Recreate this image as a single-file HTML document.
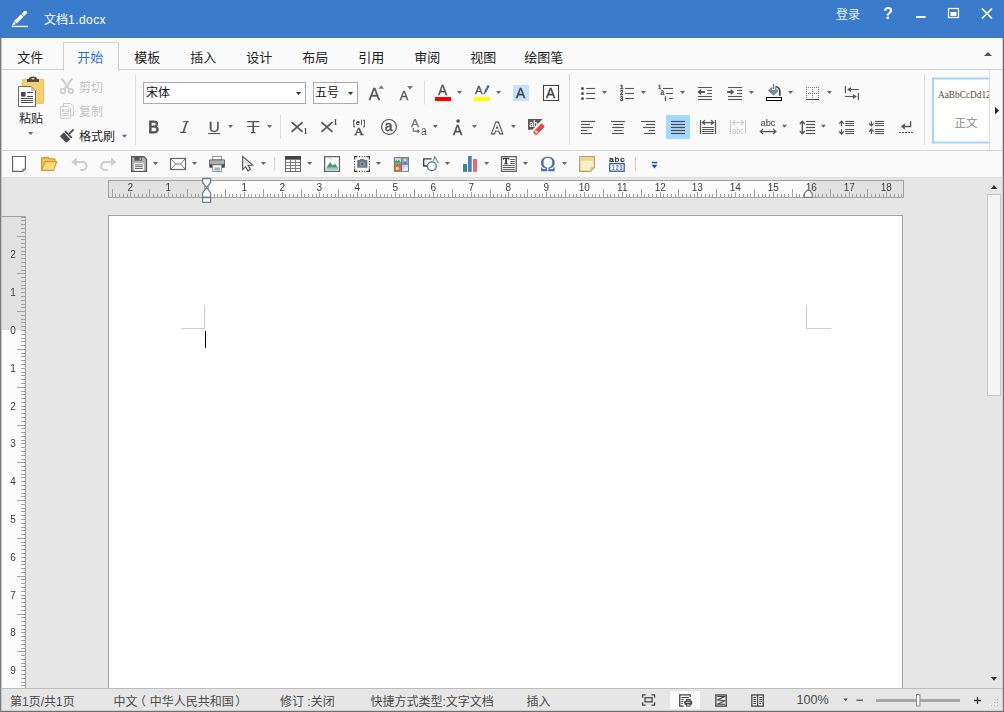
<!DOCTYPE html>
<html lang="zh-CN"><head><meta charset="utf-8"><title>文档1.docx</title>
<style>
html,body{margin:0;padding:0;}
body{width:1004px;height:712px;overflow:hidden;background:#e6e6e6;position:relative;font-family:"Liberation Sans","Noto Sans CJK SC",sans-serif;}
.bg{position:absolute;left:0;}
.t{position:absolute;white-space:nowrap;line-height:1.35;}
svg{position:absolute;left:0;top:0;}
svg.top{will-change:transform;}
svg text{font-family:"Liberation Sans","Noto Sans CJK SC",sans-serif;}
</style></head><body>
<div class="bg" style="top:0;width:1004px;height:38px;background:#3a7bcb"></div>
<div class="bg" style="top:38px;width:1004px;height:139px;background:#fafafa"></div>
<div class="bg" style="top:69px;width:1004px;height:1px;background:#cfcfcf"></div>
<div class="bg" style="top:42px;left:63px;width:54px;height:28px;background:#fafafa;border:1px solid #cfcfcf;border-bottom:none"></div>
<div class="bg" style="top:150px;width:1004px;height:1px;background:#d6d6d6"></div>
<div class="bg" style="top:177px;width:1004px;height:1px;background:#dddddd"></div>
<svg width="1004" height="712" viewBox="0 0 1004 712">
<rect x="143.5" y="82.5" width="162" height="21" fill="#fff" stroke="#ababab"/>
<rect x="313.5" y="82.5" width="44" height="21" fill="#fff" stroke="#ababab"/>
<path d="M989 78.5 H933 V142.5 H989" fill="#fff" stroke="#a8d3fa" stroke-width="2"/>
<rect x="108.5" y="215.5" width="794" height="480" fill="#fff" stroke="#a0a0a0"/>
<rect x="0" y="688" width="1004" height="24" fill="#e6e6e6"/><rect x="0" y="688" width="1004" height="1" fill="#bcbcbc"/>
</svg>
<div class="t" style="left:44px;top:11.5px;font-size:12px;color:#ffffff;">文档<span style="letter-spacing:0.45px">1.docx</span></div>
<div class="t" style="left:836px;top:6.5px;font-size:12px;color:#e4eefb;">登录</div>
<div class="t" style="left:17.3px;top:48.6px;font-size:13px;color:#1e1e1e;">文件</div>
<div class="t" style="left:77.3px;top:48.6px;font-size:13px;color:#2b70d6;">开始</div>
<div class="t" style="left:134.3px;top:48.6px;font-size:13px;color:#1e1e1e;">模板</div>
<div class="t" style="left:190.3px;top:48.6px;font-size:13px;color:#1e1e1e;">插入</div>
<div class="t" style="left:246.3px;top:48.6px;font-size:13px;color:#1e1e1e;">设计</div>
<div class="t" style="left:302.3px;top:48.6px;font-size:13px;color:#1e1e1e;">布局</div>
<div class="t" style="left:358.3px;top:48.6px;font-size:13px;color:#1e1e1e;">引用</div>
<div class="t" style="left:414.3px;top:48.6px;font-size:13px;color:#1e1e1e;">审阅</div>
<div class="t" style="left:470.3px;top:48.6px;font-size:13px;color:#1e1e1e;">视图</div>
<div class="t" style="left:524.3px;top:48.6px;font-size:13px;color:#1e1e1e;">绘图笔</div>
<div class="t" style="left:19px;top:110.9px;font-size:12px;color:#1e1e1e;">粘贴</div>
<div class="t" style="left:79px;top:79.5px;font-size:12px;color:#c4c4c4;">剪切</div>
<div class="t" style="left:79px;top:103.8px;font-size:12px;color:#c4c4c4;">复制</div>
<div class="t" style="left:79px;top:128.8px;font-size:12px;color:#1e1e1e;">格式刷</div>
<div class="t" style="left:146px;top:85.4px;font-size:12px;color:#111;">宋体</div>
<div class="t" style="left:315px;top:85.4px;font-size:12px;color:#111;">五号</div>
<div class="t" style="left:938px;top:88px;width:51px;overflow:hidden;font-size:10px;color:#5a4a3a;font-family:'Liberation Serif',serif;"><span style="display:inline-block;transform:scaleX(0.93);transform-origin:0 0">AaBbCcDd12</span></div>
<div class="t" style="left:954.6px;top:115.6px;font-size:11.5px;color:#8a8a8a;font-family:"Noto Serif CJK SC","Noto Sans CJK SC",serif;font-weight:300">正文</div>
<div class="t" style="left:10px;top:693.8px;font-size:12px;color:#4a4a4a;">第1页/共1页</div>
<div class="t" style="left:113.6px;top:693.8px;font-size:12px;color:#4a4a4a;">中文<span style="position:relative;left:-3.5px">（</span>中华人民共和国<span style="position:relative;left:1.5px">）</span></div>
<div class="t" style="left:280px;top:693.8px;font-size:12px;color:#4a4a4a;">修订 :关闭</div>
<div class="t" style="left:370.5px;top:693.8px;font-size:12px;color:#4a4a4a;">快捷方式类型:文字文档</div>
<div class="t" style="left:526.5px;top:693.8px;font-size:12px;color:#4a4a4a;">插入</div>
<div class="t" style="left:796.5px;top:692.2px;font-size:12.6px;color:#4a4a4a;">100%</div>
<svg class="top" width="1004" height="712" viewBox="0 0 1004 712">
<g fill="#fff" transform="translate(12.1,25.4) rotate(-44.2)"><path d="M0 0 L3.7 -1.6 V1.6 Z"/><rect x="4.5" y="-1.8" width="9.6" height="3.6"/><path d="M14.9 -1.8 H18.4 A1.8 1.8 0 0 1 18.4 1.8 H14.9 Z"/></g><rect x="11.8" y="25.8" width="16.3" height="1.3" fill="#fff"/>
<text x="883.3" y="19" font-size="16" fill="#fff" font-weight="bold">?</text>
<rect x="916" y="16" width="9.5" height="2" fill="#fff"/>
<rect x="948.5" y="8.5" width="10" height="9" fill="none" stroke="#fff" stroke-width="1.2"/><rect x="950.5" y="12" width="6" height="4" fill="#fff"/>
<path d="M982 8.5 L992 18.5 M992 8.5 L982 18.5" stroke="#fff" stroke-width="1.7" fill="none"/>
<polygon points="984,56 992,56 988,52" fill="#555"/>
<rect x="22.5" y="79.2" width="21.3" height="24.2" rx="1" fill="#f4d070" stroke="#e6b94e" stroke-width="0.8"/>
<path d="M27 82 L27 79.6 Q27 79 27.8 79 L28.8 79 Q29.6 76.6 33 76.6 Q36.4 76.6 37.2 79 L38.2 79 Q39 79 39 79.6 L39 82 Z" fill="#4a4a4a"/>
<ellipse cx="33" cy="78.7" rx="1.7" ry="0.7" fill="#e8e0c8"/>
<path d="M18.5 86.5 L31 86.5 L35.5 91 L35.5 106.5 L18.5 106.5 Z" fill="#fff" stroke="#6a6a6a" stroke-width="1"/>
<path d="M31 86.8 L31 91 L35.2 91 Z" fill="#c4c4c4"/>
<rect x="21" y="92" width="4.6" height="4.6" fill="#4a4a4a"/>
<line x1="27" y1="92.5" x2="33" y2="92.5" stroke="#4a4a4a" stroke-width="1"/>
<line x1="27" y1="96.5" x2="33" y2="96.5" stroke="#4a4a4a" stroke-width="1"/>
<line x1="21" y1="98.5" x2="33" y2="98.5" stroke="#4a4a4a" stroke-width="1"/>
<line x1="21" y1="100.5" x2="33" y2="100.5" stroke="#4a4a4a" stroke-width="1"/>
<line x1="21" y1="102.5" x2="33" y2="102.5" stroke="#4a4a4a" stroke-width="1"/>
<polygon points="28.099999999999998,132.0 33.3,132.0 30.7,135.0" fill="#6a6a6a"/>
<g stroke="#cbcbcb" fill="none"><circle cx="62.9" cy="91.1" r="2.3" stroke-width="1.6"/><circle cx="70.8" cy="91.1" r="2.3" stroke-width="1.6"/><path d="M64.4 89.2 L72.3 78.5 M69.4 89.2 L61.5 78.5" stroke-width="2.1"/></g><rect x="66.3" y="84" width="1.2" height="1.2" fill="#fafafa"/>
<g stroke="#cbcbcb" fill="none" stroke-width="1"><path d="M63.5 106 V103.5 H70.6 L73.4 106.3 V115.5 H71.2"/><path d="M60.5 106.5 H68 L70.6 109.1 V118.3 H60.5 Z" fill="#fafafa"/><path d="M65.6 109.9 H69.2 M65.6 111.7 H69.2 M62.1 113.5 H69.2 M62.1 115.5 H69.2"/></g><rect x="62.1" y="109.4" width="2.5" height="2.3" fill="#cbcbcb"/>
<g fill="#4a4a4a"><path d="M72.9 128.7 L74.2 130 L69.9 134.6 L68.6 133.3 Z"/><path d="M65.7 130.5 L72.4 137.2 L71.1 138.5 L64.4 131.8 Z"/><path d="M63.7 132.6 L70.3 139.2 L66.2 142.7 L59.9 136.3 Z"/></g>
<polygon points="121.9,134.8 127.1,134.8 124.5,137.8" fill="#6a6a6a"/>
<line x1="135.5" y1="74" x2="135.5" y2="145" stroke="#dcdcdc" stroke-width="1"/>
<polygon points="296.0,92.0 301.20000000000005,92.0 298.6,95.0" fill="#333"/>
<polygon points="348.0,92.0 353.20000000000005,92.0 350.6,95.0" fill="#333"/>
<text x="368.7" y="100" font-size="16.8" fill="#555555" stroke="#555555" stroke-width="0.35">A</text>
<polygon points="378.4,88.7 384,88.7 381.2,85.2" fill="#7a7a7a"/>
<text x="399.8" y="100" font-size="12.8" fill="#555555" stroke="#555555" stroke-width="0.35">A</text>
<polygon points="407.1,86.1 413,86.1 410.05,89.7" fill="#7a7a7a"/>
<line x1="424.5" y1="81" x2="424.5" y2="104.5" stroke="#dcdcdc" stroke-width="1"/>
<text x="437.9" y="94.8" font-size="13.8" fill="#555555" stroke="#555555" stroke-width="0.35">A</text>
<rect x="435" y="97" width="16" height="4" fill="#ff0000"/>
<polygon points="456.9,90.9 462.1,90.9 459.5,93.9" fill="#6a6a6a"/>
<text x="474.9" y="93.5" font-size="11.4" fill="#555555" stroke="#555555" stroke-width="0.35">A</text>
<path d="M487.6 84.9 L489.7 86 L486.2 92.5 L484.2 91.4 Z" fill="#3b6fb6"/><path d="M484.2 91.4 L486.2 92.5 L483.5 95 Z" fill="#c4513a"/>
<rect x="474" y="97" width="16" height="4" fill="#ffff00"/>
<polygon points="496.0,90.9 501.20000000000005,90.9 498.6,93.9" fill="#6a6a6a"/>
<rect x="513" y="85" width="16" height="16" fill="#c4e2ff"/>
<text x="516" y="97.7" font-size="13.8" fill="#444" stroke="#444" stroke-width="0.4">A</text>
<rect x="543.5" y="85.5" width="15" height="15" fill="#fdfdfd" stroke="#444" stroke-width="1.1"/>
<text x="546.1" y="97.7" font-size="13.8" fill="#444" stroke="#444" stroke-width="0.4">A</text>
<text x="148.3" y="132.9" font-size="16.3" fill="#555555" stroke="#555555" stroke-width="0.8">B</text>
<path d="M183 121.7 H189 M180.1 132.4 H186.2" stroke="#555555" stroke-width="1.1" fill="none"/><path d="M186.9 121.4 L183.1 132.7" stroke="#555555" stroke-width="1.6" fill="none"/>
<text x="208.7" y="132.1" font-size="15.2" fill="#555555" stroke="#555555" stroke-width="0.35">U</text>
<line x1="208.1" y1="133.55" x2="220" y2="133.55" stroke="#555555" stroke-width="1.1"/>
<polygon points="227.9,125.0 233.1,125.0 230.5,128.0" fill="#6a6a6a"/>
<path d="M247 121.6 H259.2 M247 126.5 H259.2 M250.9 132.6 H255.5" stroke="#555555" stroke-width="1.2" fill="none"/><path d="M253.2 121.6 V132.6" stroke="#555555" stroke-width="1.6" fill="none"/>
<polygon points="266.9,125.0 272.1,125.0 269.5,128.0" fill="#6a6a6a"/>
<line x1="280.5" y1="115" x2="280.5" y2="139" stroke="#dcdcdc" stroke-width="1"/>
<path d="M291.6 122.2 L302.6 131.8 M302.6 122.2 L291.6 131.8" stroke="#555555" stroke-width="1.75" fill="none"/>
<text x="303.5" y="133.8" font-size="7.8" fill="#4a4a4a" style="font-family:Liberation Serif,serif" font-weight="bold">1</text>
<path d="M321.4 122.2 L332.4 131.8 M332.4 122.2 L321.4 131.8" stroke="#555555" stroke-width="1.75" fill="none"/>
<text x="333.6" y="124.9" font-size="7.8" fill="#4a4a4a" style="font-family:Liberation Serif,serif" font-weight="bold">1</text>
<text x="353" y="124.7" font-size="6.9" fill="#4a4a4a" stroke="#4a4a4a" stroke-width="0.3" textLength="12.2" lengthAdjust="spacing">[ei]</text>
<text x="354.1" y="134.8" font-size="11.4" fill="#555555" style="font-family:Liberation Serif,serif" stroke="#555" stroke-width="0.35" textLength="9.9" lengthAdjust="spacingAndGlyphs">A</text>
<circle cx="389" cy="126.9" r="7.4" fill="none" stroke="#555555" stroke-width="1.2"/>
<text x="384.7" y="130.6" font-size="13.8" fill="#555555" stroke="#555555" stroke-width="0.5">a</text>
<text x="411.1" y="126.5" font-size="10.1" fill="#707070" stroke="#707070" stroke-width="0.25" textLength="8" lengthAdjust="spacingAndGlyphs">A</text>
<path d="M413.3 127.8 V131.2 H418.6" stroke="#666" stroke-width="1.2" fill="none"/><polygon points="420,131.2 417.4,129 417.4,133.4" fill="#666"/>
<text x="421" y="134.8" font-size="12" fill="#555" textLength="5.6" lengthAdjust="spacingAndGlyphs">a</text>
<polygon points="432.7,125.0 437.90000000000003,125.0 435.3,128.0" fill="#6a6a6a"/>
<circle cx="458.1" cy="121" r="1.85" fill="#555555"/>
<text x="452.9" y="134.8" font-size="13.9" fill="#555555" stroke="#555555" stroke-width="0.45">A</text>
<polygon points="471.9,125.0 477.1,125.0 474.5,128.0" fill="#6a6a6a"/>
<g transform="translate(492.5,132.6) scale(0.9,1)" font-size="15.2"><text x="0.7" y="0.7" fill="#d6d6d6" stroke="#d6d6d6" stroke-width="3.1" stroke-linejoin="round">A</text><text x="0" y="0" fill="#4a4a4a" stroke="#4a4a4a" stroke-width="2.8" stroke-miterlimit="2.5">A</text><text x="0" y="0" fill="#fff" stroke="#fff" stroke-width="0.55">A</text></g>
<polygon points="510.9,125.0 516.1,125.0 513.5,128.0" fill="#6a6a6a"/>
<path d="M528 119 H542.1 L542.1 119.6 L532.4 129.8 H528 Z" fill="#595959"/>
<text x="529.2" y="126.6" font-size="8.2" fill="#fff" font-weight="bold" textLength="8.6" lengthAdjust="spacingAndGlyphs">ab</text>
<g transform="rotate(45 538.9 129.3)"><rect x="536.2" y="122.8" width="5.4" height="13.2" rx="1.4" fill="#e5484d" stroke="#fafafa" stroke-width="0.8"/><rect x="537.3" y="132" width="3.2" height="1.9" rx="0.9" fill="#fff"/></g>
<line x1="569.5" y1="74" x2="569.5" y2="145" stroke="#dcdcdc" stroke-width="1"/>
<circle cx="582.5" cy="88.5" r="1.5" fill="#555555"/>
<line x1="586.2" y1="88.5" x2="595" y2="88.5" stroke="#555555" stroke-width="1.08"/>
<circle cx="582.5" cy="93.5" r="1.5" fill="#555555"/>
<line x1="586.2" y1="93.5" x2="595" y2="93.5" stroke="#555555" stroke-width="1.08"/>
<circle cx="582.5" cy="98.5" r="1.5" fill="#555555"/>
<line x1="586.2" y1="98.5" x2="595" y2="98.5" stroke="#555555" stroke-width="1.08"/>
<polygon points="601.9,91.0 607.1,91.0 604.5,94.0" fill="#6a6a6a"/>
<line x1="625" y1="88.5" x2="634" y2="88.5" stroke="#555555" stroke-width="1.08"/>
<line x1="625" y1="93.5" x2="634" y2="93.5" stroke="#555555" stroke-width="1.08"/>
<line x1="625" y1="98.5" x2="634" y2="98.5" stroke="#555555" stroke-width="1.08"/>
<text x="619.9" y="88.9" font-size="6" fill="#4a4a4a" font-weight="bold" stroke="#4a4a4a" stroke-width="0.35" textLength="3.3" lengthAdjust="spacingAndGlyphs">1</text>
<text x="619.9" y="94.8" font-size="6.4" fill="#4a4a4a" font-weight="bold" stroke="#4a4a4a" stroke-width="0.35" textLength="3.3" lengthAdjust="spacingAndGlyphs">2</text>
<text x="619.9" y="101" font-size="6.6" fill="#4a4a4a" font-weight="bold" stroke="#4a4a4a" stroke-width="0.35" textLength="3.3" lengthAdjust="spacingAndGlyphs">3</text>
<polygon points="640.8,91.0 646.0,91.0 643.4,94.0" fill="#6a6a6a"/>
<text x="658.2" y="89" font-size="6" fill="#4a4a4a" font-weight="bold" stroke="#4a4a4a" stroke-width="0.3" textLength="2.8" lengthAdjust="spacingAndGlyphs">1</text>
<line x1="663" y1="88.5" x2="673" y2="88.5" stroke="#555555" stroke-width="1.08"/>
<text x="660.6" y="94.9" font-size="8.6" fill="#4a4a4a" font-weight="bold" stroke="#4a4a4a" stroke-width="0.2" textLength="3.6" lengthAdjust="spacingAndGlyphs">a</text>
<line x1="666" y1="93.5" x2="673" y2="93.5" stroke="#555555" stroke-width="1.08"/>
<text x="664.5" y="101" font-size="7" fill="#4a4a4a" font-weight="bold" stroke="#4a4a4a" stroke-width="0.2">i</text>
<line x1="669" y1="98.5" x2="673" y2="98.5" stroke="#555555" stroke-width="1.08"/>
<polygon points="679.9,91.0 685.1,91.0 682.5,94.0" fill="#6a6a6a"/>
<line x1="698" y1="87.5" x2="712" y2="87.5" stroke="#555555" stroke-width="1.08"/>
<line x1="698" y1="96.5" x2="712" y2="96.5" stroke="#555555" stroke-width="1.08"/>
<line x1="698" y1="99.5" x2="712" y2="99.5" stroke="#555555" stroke-width="1.08"/>
<line x1="707.2" y1="90.5" x2="712" y2="90.5" stroke="#555555" stroke-width="1.08"/>
<line x1="707.2" y1="93.5" x2="712" y2="93.5" stroke="#555555" stroke-width="1.08"/>
<path d="M699.6 92 H704.9" stroke="#555555" stroke-width="1.9"/><polygon points="697.3,92 701.1,88.9 701.1,95.1" fill="#555555"/>
<line x1="728" y1="87.5" x2="742" y2="87.5" stroke="#555555" stroke-width="1.08"/>
<line x1="728" y1="96.5" x2="742" y2="96.5" stroke="#555555" stroke-width="1.08"/>
<line x1="728" y1="99.5" x2="742" y2="99.5" stroke="#555555" stroke-width="1.08"/>
<line x1="737.2" y1="90.5" x2="742" y2="90.5" stroke="#555555" stroke-width="1.08"/>
<line x1="737.2" y1="93.5" x2="742" y2="93.5" stroke="#555555" stroke-width="1.08"/>
<path d="M727.1 92 H732.2" stroke="#555555" stroke-width="1.9"/><polygon points="734.4,92 730.6,88.9 730.6,95.1" fill="#555555"/>
<polygon points="748.8,91.0 754.0,91.0 751.4,94.0" fill="#6a6a6a"/>
<path d="M767.9 90.7 L773.5 85.6 L778.4 90.9 L773.5 95.8 Z" fill="#7f8994"/>
<path d="M775.4 86.5 Q779.8 87.4 779.8 91.4 V95.8" stroke="#444" stroke-width="1.7" fill="none"/>
<path d="M773.5 84 V90" stroke="#fafafa" stroke-width="2.6"/><path d="M773.5 84 V89.2" stroke="#4a78b0" stroke-width="1.2"/>
<rect x="766.5" y="97.5" width="15" height="3" fill="#fff" stroke="#000" stroke-width="1"/>
<polygon points="787.9,91.0 793.1,91.0 790.5,94.0" fill="#6a6a6a"/>
<g stroke="#777" stroke-width="1" stroke-dasharray="1 1" fill="none" shape-rendering="crispEdges"><path d="M806 87.5 H819 M806 93.5 H819 M806.5 89 V99 M812.5 89 V99 M818.5 89 V99"/></g>
<line x1="806" y1="99.5" x2="819" y2="99.5" stroke="#444" stroke-width="1.1"/>
<polygon points="826.8,91.0 832.0,91.0 829.4,94.0" fill="#6a6a6a"/>
<g stroke="#555555" stroke-width="1.2" fill="none"><path d="M845.4 86 V93 M849.5 89.5 H858.8 M858.4 93 V100 M845.1 96.5 H854.4"/></g>
<polygon points="847,89.5 851,87 851,92" fill="#555555"/><polygon points="856.9,96.5 852.9,94 852.9,99" fill="#555555"/>
<line x1="581" y1="121.5" x2="595" y2="121.5" stroke="#555555" stroke-width="1.1500000000000001"/>
<line x1="581" y1="124.5" x2="590" y2="124.5" stroke="#555555" stroke-width="1.1500000000000001"/>
<line x1="581" y1="127.5" x2="593" y2="127.5" stroke="#555555" stroke-width="1.1500000000000001"/>
<line x1="581" y1="130.5" x2="587" y2="130.5" stroke="#555555" stroke-width="1.1500000000000001"/>
<line x1="581" y1="133.5" x2="592" y2="133.5" stroke="#555555" stroke-width="1.1500000000000001"/>
<line x1="611" y1="121.5" x2="625" y2="121.5" stroke="#555555" stroke-width="1.1500000000000001"/>
<line x1="613" y1="124.5" x2="623" y2="124.5" stroke="#555555" stroke-width="1.1500000000000001"/>
<line x1="612" y1="127.5" x2="624" y2="127.5" stroke="#555555" stroke-width="1.1500000000000001"/>
<line x1="614" y1="130.5" x2="622" y2="130.5" stroke="#555555" stroke-width="1.1500000000000001"/>
<line x1="612" y1="133.5" x2="624" y2="133.5" stroke="#555555" stroke-width="1.1500000000000001"/>
<line x1="641" y1="121.5" x2="655" y2="121.5" stroke="#555555" stroke-width="1.1500000000000001"/>
<line x1="646" y1="124.5" x2="655" y2="124.5" stroke="#555555" stroke-width="1.1500000000000001"/>
<line x1="643" y1="127.5" x2="655" y2="127.5" stroke="#555555" stroke-width="1.1500000000000001"/>
<line x1="649" y1="130.5" x2="655" y2="130.5" stroke="#555555" stroke-width="1.1500000000000001"/>
<line x1="644" y1="133.5" x2="655" y2="133.5" stroke="#555555" stroke-width="1.1500000000000001"/>
<rect x="666" y="115" width="24" height="24" fill="#a6d8ff"/>
<line x1="671" y1="121.5" x2="685" y2="121.5" stroke="#4a4a4a" stroke-width="1.1500000000000001"/>
<line x1="671" y1="124.5" x2="685" y2="124.5" stroke="#4a4a4a" stroke-width="1.1500000000000001"/>
<line x1="671" y1="127.5" x2="685" y2="127.5" stroke="#4a4a4a" stroke-width="1.1500000000000001"/>
<line x1="671" y1="130.5" x2="685" y2="130.5" stroke="#4a4a4a" stroke-width="1.1500000000000001"/>
<line x1="671" y1="133.5" x2="685" y2="133.5" stroke="#4a4a4a" stroke-width="1.1500000000000001"/>
<g stroke="#555555" fill="none"><path d="M700.5 120 V134 M715.5 120 V134" stroke-width="1.2"/><path d="M702.6 122.5 H713.4 M705 120.2 L702.4 122.5 L705 124.8 M711 120.2 L713.6 122.5 L711 124.8" stroke-width="1.25"/><path d="M702.2 127.45 H713.8 M702.2 129.5 H713.8 M702.2 131.5 H713.8 M702.2 133.45 H713.8" stroke-width="1.05"/></g>
<g stroke="#cbcbcb" fill="none"><path d="M730.4 120 V134 M745.5 120 V134" stroke-width="1.1"/><path d="M732.6 122.5 H743.4 M735 120.2 L732.4 122.5 L735 124.8 M741 120.2 L743.6 122.5 L741 124.8" stroke-width="1.1"/></g>
<text x="732.2" y="133.5" font-size="8.6" fill="#cbcbcb" textLength="11.8" lengthAdjust="spacingAndGlyphs">abc</text>
<text x="760.6" y="126.4" font-size="8.7" fill="#555555" stroke="#555555" stroke-width="0.15" textLength="14.8" lengthAdjust="spacingAndGlyphs">abc</text>
<g stroke="#555555" stroke-width="1.25" fill="none"><path d="M760.4 131.5 H775.8 M763.2 128.9 L760.3 131.5 L763.2 134.1 M773 128.9 L775.9 131.5 L773 134.1"/></g>
<polygon points="781.9,124.8 787.1,124.8 784.5,127.8" fill="#6a6a6a"/>
<g stroke="#555555" stroke-width="1.3" fill="none"><path d="M802.3 121.4 V133.6 M799.8 124 L802.3 121.2 L804.8 124 M799.8 131 L802.3 133.8 L804.8 131"/></g>
<line x1="806" y1="121.5" x2="815" y2="121.5" stroke="#555555" stroke-width="1.1500000000000001"/>
<line x1="806" y1="124.5" x2="815" y2="124.5" stroke="#555555" stroke-width="1.1500000000000001"/>
<line x1="806" y1="127.5" x2="815" y2="127.5" stroke="#555555" stroke-width="1.1500000000000001"/>
<line x1="806" y1="130.5" x2="815" y2="130.5" stroke="#555555" stroke-width="1.1500000000000001"/>
<line x1="806" y1="133.5" x2="815" y2="133.5" stroke="#555555" stroke-width="1.1500000000000001"/>
<polygon points="820.8,124.8 826.0,124.8 823.4,127.8" fill="#6a6a6a"/>
<line x1="845.3" y1="121.45" x2="854.1" y2="121.45" stroke="#555555" stroke-width="1.05"/>
<line x1="845.3" y1="123.5" x2="854.1" y2="123.5" stroke="#555555" stroke-width="1.05"/>
<line x1="845.3" y1="125.5" x2="854.1" y2="125.5" stroke="#555555" stroke-width="1.05"/>
<line x1="845.3" y1="129.5" x2="854.1" y2="129.5" stroke="#555555" stroke-width="1.05"/>
<line x1="845.3" y1="131.5" x2="854.1" y2="131.5" stroke="#555555" stroke-width="1.05"/>
<line x1="845.3" y1="133.55" x2="854.1" y2="133.55" stroke="#555555" stroke-width="1.05"/>
<path d="M841.5 121.2 V125.9 M839.2 123.7 L841.5 121.2 L843.8 123.7" stroke="#555555" stroke-width="1.25" fill="none"/>
<path d="M841.5 129.2 V134 M839.2 131.5 L841.5 134 L843.8 131.5" stroke="#555555" stroke-width="1.25" fill="none"/>
<line x1="875.1999999999999" y1="121.45" x2="884.0" y2="121.45" stroke="#555555" stroke-width="1.05"/>
<line x1="875.1999999999999" y1="123.5" x2="884.0" y2="123.5" stroke="#555555" stroke-width="1.05"/>
<line x1="875.1999999999999" y1="125.5" x2="884.0" y2="125.5" stroke="#555555" stroke-width="1.05"/>
<line x1="875.1999999999999" y1="129.5" x2="884.0" y2="129.5" stroke="#555555" stroke-width="1.05"/>
<line x1="875.1999999999999" y1="131.5" x2="884.0" y2="131.5" stroke="#555555" stroke-width="1.05"/>
<line x1="875.1999999999999" y1="133.55" x2="884.0" y2="133.55" stroke="#555555" stroke-width="1.05"/>
<path d="M871.4 121.2 V125.9 M869.1 123.4 L871.4 125.9 L873.6999999999999 123.4" stroke="#555555" stroke-width="1.25" fill="none"/>
<path d="M871.4 129.2 V134 M869.1 131.7 L871.4 129.2 L873.6999999999999 131.7" stroke="#555555" stroke-width="1.25" fill="none"/>
<path d="M910.6 121 V126.5 H904" stroke="#555555" stroke-width="1.3" fill="none"/><polygon points="901,126.5 904.8,123.3 904.8,129.7" fill="#555555"/>
<path d="M899 132.5 H913.2" stroke="#555555" stroke-width="1.05" stroke-dasharray="2 1"/>
<line x1="924.5" y1="74" x2="924.5" y2="145" stroke="#dcdcdc" stroke-width="1"/>
<line x1="989.5" y1="70" x2="989.5" y2="150" stroke="#e0e0e0" stroke-width="1"/>
<polygon points="995,106.8 995,114.4 999,110.6" fill="#222"/>
<path d="M12.6 156.5 H25.4 V169 L22.6 171.4 H12.6 Z" fill="#fff" stroke="#666" stroke-width="1.2"/><path d="M22.2 168.4 H25.2 L22.2 171.2 Z" fill="#9a9a9a"/>
<path d="M41.6 170.4 V158.4 Q41.6 157.8 42.4 157.8 L43.4 157.6 H48.6 L49.4 158.8 H54.4 Q55 158.8 55 159.4 V162" fill="#f0c458" stroke="#cc9a2e" stroke-width="1.1"/><path d="M41.6 170.4 L45.3 161.6 H56.7 L53.6 170.4 Z" fill="#fddc80" stroke="#cf9c30" stroke-width="1.1"/>
<g fill="none" stroke="#cdcdcd" stroke-width="2.1"><path d="M76 162 H82.6 A4 4 0 0 1 82.6 170 H80.2"/><path d="M111.8 162 H105.2 A4 4 0 0 0 105.2 170 H107.6"/></g>
<polygon points="71.3,162 76.8,157.6 76.8,166.4" fill="#cdcdcd"/><polygon points="116.5,162 111,157.6 111,166.4" fill="#cdcdcd"/>
<path d="M131.6 156.6 H143.8 L146.5 159.3 V171.4 H131.6 Z" fill="#b2b2b2" stroke="#555" stroke-width="1.2"/><rect x="134.4" y="156.8" width="7.6" height="3.9" fill="#555"/><rect x="139.6" y="157.7" width="1.5" height="2.1" fill="#c8c8c8"/><rect x="133.9" y="163.3" width="9.8" height="7.4" fill="#fff"/><path d="M135 164.9 H142.8 M135 166.7 H142.8 M135 168.5 H142.8" stroke="#555" stroke-width="0.9"/>
<polygon points="152.8,162.0 158.0,162.0 155.4,165.0" fill="#6a6a6a"/>
<rect x="170.5" y="158.5" width="15" height="11" fill="#fff" stroke="#666" stroke-width="1.2"/><path d="M170.8 158.8 L175.6 164 L170.8 169.3 M185.2 158.8 L180.6 164 L185.2 169.3 M175.6 164 H180.6" fill="none" stroke="#666" stroke-width="0.9"/>
<polygon points="192.0,162.0 197.2,162.0 194.6,165.0" fill="#6a6a6a"/>
<rect x="212.7" y="156.4" width="8.8" height="3.6" fill="#fff" stroke="#888" stroke-width="0.9"/><rect x="209.2" y="159.6" width="15.7" height="8.2" rx="0.8" fill="#4a4a4a"/><rect x="209.9" y="160.3" width="14.3" height="3.9" fill="#adadad"/><rect x="222.1" y="160.7" width="1.8" height="1.7" fill="#6fe6ee"/><rect x="212.7" y="164.9" width="8.8" height="6.5" fill="#fff" stroke="#888" stroke-width="0.9"/><path d="M214.3 168.1 H219.9 M214.3 169.8 H219.9" stroke="#3f6fb5" stroke-width="0.9"/>
<path d="M242.7 156.5 V169.6 L245.6 166.7 L248 170.8 L250.4 169.3 L248.1 165.4 L252.6 165 Z" fill="#fff" stroke="#555" stroke-width="1.2" stroke-linejoin="miter"/><path d="M244 159.2 L251 164.6 L247.2 165 L249.4 169 L248.4 169.6 L246 165.6 Z" fill="#dcdcdc" opacity="0.8"/>
<polygon points="260.79999999999995,162.0 266.0,162.0 263.4,165.0" fill="#6a6a6a"/>
<line x1="274.7" y1="157" x2="274.7" y2="170.6" stroke="#d0d0d0" stroke-width="1"/>
<rect x="285.5" y="156.5" width="15" height="15" fill="#fff" stroke="#6a6a6a"/><rect x="285" y="156" width="16" height="3.7" fill="#444"/><path d="M290.5 159.6 V171 M295.6 159.6 V171 M286 162.5 H300 M286 165.5 H300 M286 168.5 H300" stroke="#7a7a7a" stroke-width="1"/>
<polygon points="307.0,162.0 312.20000000000005,162.0 309.6,165.0" fill="#6a6a6a"/>
<rect x="324.65" y="156.65" width="14.8" height="14.7" fill="#fff" stroke="#666" stroke-width="1.3"/><path d="M326.6 158.6 Q329 157.8 331.4 158.6 T336 158.4 L335.8 159.2 Q332 160 329 159.4 Z" fill="#cfe4f6"/><path d="M326.3 167.8 L330.1 162 L332.8 165.4 L335.1 163.8 L338 167.4 V167.8 Z" fill="#4a9e6a"/><rect x="326.3" y="167.8" width="11.7" height="2" fill="#8ac0ea"/>
<g fill="none" stroke="#444" stroke-width="1.2"><path d="M354.6 159.4 V156.6 H357.6 M366.4 156.6 H369.4 V159.4 M369.4 168.6 V171.4 H366.4 M357.6 171.4 H354.6 V168.6"/><path d="M359 156.6 H365.4 M359 171.4 H365.4 M354.6 161 V167.4 M369.4 161 V167.4" stroke-dasharray="1.1 1.55"/></g>
<path d="M357.2 160.6 Q357.2 160.1 357.8 160.1 H359.6 L360.2 158.9 H364.2 L364.8 160.1 H366.8 Q367.4 160.1 367.4 160.6 V167.8 H357.2 Z" fill="#6a7686"/><circle cx="362.2" cy="164" r="2.6" fill="#97a1ae"/><circle cx="362.2" cy="164" r="1.5" fill="#5c6878"/>
<polygon points="375.9,162.0 381.1,162.0 378.5,165.0" fill="#6a6a6a"/>
<rect x="393.8" y="157" width="15.2" height="14.9" fill="#7e7e7e"/><rect x="395" y="158.2" width="5.9" height="5.4" fill="#cfe6f4"/><path d="M395 163.6 V161.4 L396.4 159.8 L397.6 161.4 L398.8 159.6 L400.9 162.4 V163.6 Z" fill="#4a9e6a"/><rect x="402.1" y="158.2" width="5.9" height="5.4" fill="#8ea6c4"/><circle cx="405" cy="160" r="1.2" fill="#e8e8e8"/><path d="M403 163.6 Q405 160.4 407 163.6 Z" fill="#3f67b1"/><rect x="395" y="164.8" width="5.9" height="6" fill="#e0645a"/><circle cx="397.4" cy="168.4" r="1.7" fill="#ffd85a"/><rect x="402.1" y="164.8" width="5.9" height="6" fill="#b9d9fa"/><path d="M402.1 170.8 L406 166 L408 168 V170.8 Z" fill="#e6f2ff"/>
<path d="M431.6 158.8 H423.7 V166 H427" fill="none" stroke="#2e3a5a" stroke-width="1.3"/><circle cx="431.9" cy="166.3" r="4.4" fill="#fff" stroke="#4a6eb0" stroke-width="1.3"/><path d="M433.4 161 L434.7 156.6 L438.5 163.4" fill="none" stroke="#4a9a8a" stroke-width="1.1"/>
<polygon points="444.79999999999995,162.0 450.0,162.0 447.4,165.0" fill="#6a6a6a"/>
<rect x="463" y="164" width="4.1" height="7.9" fill="#3a8a88"/><rect x="468" y="156" width="3.7" height="15.9" fill="#4a7ebe"/><rect x="473" y="158.9" width="4" height="13" fill="#d87070"/>
<polygon points="484.0,162.0 489.20000000000005,162.0 486.6,165.0" fill="#6a6a6a"/>
<rect x="501.55" y="156.65" width="14.7" height="14.7" fill="#fff" stroke="#666" stroke-width="1.3"/>
<text x="503" y="164" font-size="7.6" fill="#333" style="font-family:Liberation Serif,serif" font-weight="bold" stroke="#333" stroke-width="0.4" textLength="6.2" lengthAdjust="spacingAndGlyphs">T</text>
<path d="M510.3 159.5 H514.8 M510.3 161.5 H514.8 M510.3 163.5 H514.8 M503.1 165.6 H514.8 M503.1 167.5 H514.8 M503.1 169.4 H514.8" stroke="#555" stroke-width="0.95"/>
<polygon points="522.8,162.0 528.0,162.0 525.4,165.0" fill="#6a6a6a"/>
<text x="540" y="170.8" font-size="20.6" fill="#4f6fa0" style="font-family:Liberation Serif,serif" stroke="#4f6fa0" stroke-width="0.35" textLength="15.6" lengthAdjust="spacingAndGlyphs">Ω</text>
<polygon points="562.0,162.0 567.2,162.0 564.6,165.0" fill="#6a6a6a"/>
<path d="M579.7 156.6 H594.4 V167.4 L590.4 171.4 H579.7 Z" fill="#f6eec4" stroke="#b8a070" stroke-width="1.2"/><rect x="580.3" y="157.2" width="13.5" height="3.4" fill="#ecd890"/><path d="M590.2 167.2 H594.2 L590.2 171.2 Z" fill="#dcc48c"/>
<g transform="translate(608.9,161.7) scale(1.22,1)"><text x="0 4.6 9.3" y="0" font-size="7.1" fill="#333" stroke="#333" stroke-width="0.3">abc</text></g>
<rect x="609.75" y="163.65" width="14.4" height="7.6" fill="#fff" stroke="#2f5fa8" stroke-width="1.3"/>
<g transform="translate(611.9,170) scale(0.7,1)"><text x="0 5.7 11.4" y="0" font-size="6.8" fill="#2f5fa8" stroke="#2f5fa8" stroke-width="0.25">123</text></g>
<line x1="635.5" y1="157.3" x2="635.5" y2="170.6" stroke="#d0d0d0" stroke-width="1"/>
<rect x="651.8" y="161.8" width="5.4" height="1.5" fill="#1f4f9f"/><polygon points="651.6,164.7 657.4,164.7 654.5,168.5" fill="#1f4f9f"/>
<rect x="108.5" y="180.5" width="795" height="17" fill="#e1e1e1" stroke="#a2a2a2"/>
<rect x="206" y="181" width="603" height="16" fill="#fbfbfb"/>
<path d="M112.5 189 V197 M115.5 194 V197 M119.5 194 V197 M123.5 194 V197 M127.5 194 V197 M130.5 192 V197 M134.5 194 V197 M138.5 194 V197 M142.5 194 V197 M146.5 194 V197 M149.5 189 V197 M153.5 194 V197 M157.5 194 V197 M161.5 194 V197 M164.5 194 V197 M168.5 192 V197 M172.5 194 V197 M176.5 194 V197 M180.5 194 V197 M183.5 194 V197 M187.5 189 V197 M191.5 194 V197 M195.5 194 V197 M198.5 194 V197 M202.5 194 V197 M206.5 192 V197 M210.5 194 V197 M214.5 194 V197 M217.5 194 V197 M221.5 194 V197 M225.5 189 V197 M229.5 194 V197 M232.5 194 V197 M236.5 194 V197 M240.5 194 V197 M244.5 192 V197 M248.5 194 V197 M251.5 194 V197 M255.5 194 V197 M259.5 194 V197 M263.5 189 V197 M267.5 194 V197 M270.5 194 V197 M274.5 194 V197 M278.5 194 V197 M282.5 192 V197 M285.5 194 V197 M289.5 194 V197 M293.5 194 V197 M297.5 194 V197 M301.5 189 V197 M304.5 194 V197 M308.5 194 V197 M312.5 194 V197 M316.5 194 V197 M319.5 192 V197 M323.5 194 V197 M327.5 194 V197 M331.5 194 V197 M335.5 194 V197 M338.5 189 V197 M342.5 194 V197 M346.5 194 V197 M350.5 194 V197 M353.5 194 V197 M357.5 192 V197 M361.5 194 V197 M365.5 194 V197 M369.5 194 V197 M372.5 194 V197 M376.5 189 V197 M380.5 194 V197 M384.5 194 V197 M387.5 194 V197 M391.5 194 V197 M395.5 192 V197 M399.5 194 V197 M403.5 194 V197 M406.5 194 V197 M410.5 194 V197 M414.5 189 V197 M418.5 194 V197 M421.5 194 V197 M425.5 194 V197 M429.5 194 V197 M433.5 192 V197 M437.5 194 V197 M440.5 194 V197 M444.5 194 V197 M448.5 194 V197 M452.5 189 V197 M455.5 194 V197 M459.5 194 V197 M463.5 194 V197 M467.5 194 V197 M471.5 192 V197 M474.5 194 V197 M478.5 194 V197 M482.5 194 V197 M486.5 194 V197 M490.5 189 V197 M493.5 194 V197 M497.5 194 V197 M501.5 194 V197 M505.5 194 V197 M508.5 192 V197 M512.5 194 V197 M516.5 194 V197 M520.5 194 V197 M524.5 194 V197 M527.5 189 V197 M531.5 194 V197 M535.5 194 V197 M539.5 194 V197 M542.5 194 V197 M546.5 192 V197 M550.5 194 V197 M554.5 194 V197 M558.5 194 V197 M561.5 194 V197 M565.5 189 V197 M569.5 194 V197 M573.5 194 V197 M576.5 194 V197 M580.5 194 V197 M584.5 192 V197 M588.5 194 V197 M592.5 194 V197 M595.5 194 V197 M599.5 194 V197 M603.5 189 V197 M607.5 194 V197 M610.5 194 V197 M614.5 194 V197 M618.5 194 V197 M622.5 192 V197 M626.5 194 V197 M629.5 194 V197 M633.5 194 V197 M637.5 194 V197 M641.5 189 V197 M644.5 194 V197 M648.5 194 V197 M652.5 194 V197 M656.5 194 V197 M660.5 192 V197 M663.5 194 V197 M667.5 194 V197 M671.5 194 V197 M675.5 194 V197 M678.5 189 V197 M682.5 194 V197 M686.5 194 V197 M690.5 194 V197 M694.5 194 V197 M697.5 192 V197 M701.5 194 V197 M705.5 194 V197 M709.5 194 V197 M712.5 194 V197 M716.5 189 V197 M720.5 194 V197 M724.5 194 V197 M728.5 194 V197 M731.5 194 V197 M735.5 192 V197 M739.5 194 V197 M743.5 194 V197 M747.5 194 V197 M750.5 194 V197 M754.5 189 V197 M758.5 194 V197 M762.5 194 V197 M765.5 194 V197 M769.5 194 V197 M773.5 192 V197 M777.5 194 V197 M781.5 194 V197 M784.5 194 V197 M788.5 194 V197 M792.5 189 V197 M796.5 194 V197 M799.5 194 V197 M803.5 194 V197 M807.5 194 V197 M811.5 192 V197 M815.5 194 V197 M818.5 194 V197 M822.5 194 V197 M826.5 194 V197 M830.5 189 V197 M833.5 194 V197 M837.5 194 V197 M841.5 194 V197 M845.5 194 V197 M849.5 192 V197 M852.5 194 V197 M856.5 194 V197 M860.5 194 V197 M864.5 194 V197 M867.5 189 V197 M871.5 194 V197 M875.5 194 V197 M879.5 194 V197 M883.5 194 V197 M886.5 192 V197 M890.5 194 V197 M894.5 194 V197 M898.5 194 V197 M901.5 194 V197" stroke="#a2a2a2" stroke-width="1" shape-rendering="crispEdges"/>
<text x="130.3" y="191" font-size="10" fill="#3c3c3c" text-anchor="middle">2</text>
<text x="168.3" y="191" font-size="10" fill="#3c3c3c" text-anchor="middle">1</text>
<text x="244.3" y="191" font-size="10" fill="#3c3c3c" text-anchor="middle">1</text>
<text x="282.3" y="191" font-size="10" fill="#3c3c3c" text-anchor="middle">2</text>
<text x="319.3" y="191" font-size="10" fill="#3c3c3c" text-anchor="middle">3</text>
<text x="357.3" y="191" font-size="10" fill="#3c3c3c" text-anchor="middle">4</text>
<text x="395.3" y="191" font-size="10" fill="#3c3c3c" text-anchor="middle">5</text>
<text x="433.3" y="191" font-size="10" fill="#3c3c3c" text-anchor="middle">6</text>
<text x="471.3" y="191" font-size="10" fill="#3c3c3c" text-anchor="middle">7</text>
<text x="508.3" y="191" font-size="10" fill="#3c3c3c" text-anchor="middle">8</text>
<text x="546.3" y="191" font-size="10" fill="#3c3c3c" text-anchor="middle">9</text>
<text x="584.3" y="191" font-size="10" fill="#3c3c3c" text-anchor="middle">10</text>
<text x="622.3" y="191" font-size="10" fill="#3c3c3c" text-anchor="middle">11</text>
<text x="660.3" y="191" font-size="10" fill="#3c3c3c" text-anchor="middle">12</text>
<text x="697.3" y="191" font-size="10" fill="#3c3c3c" text-anchor="middle">13</text>
<text x="735.3" y="191" font-size="10" fill="#3c3c3c" text-anchor="middle">14</text>
<text x="773.3" y="191" font-size="10" fill="#3c3c3c" text-anchor="middle">15</text>
<text x="811.3" y="191" font-size="10" fill="#3c3c3c" text-anchor="middle">16</text>
<text x="849.3" y="191" font-size="10" fill="#3c3c3c" text-anchor="middle">17</text>
<text x="886.3" y="191" font-size="10" fill="#3c3c3c" text-anchor="middle">18</text>
<text x="206.6" y="191" font-size="9.8" fill="#7f95b8" text-anchor="middle">0</text>
<g fill="#fff" fill-opacity="0.9" stroke="#78808c" stroke-width="1.3" stroke-linejoin="round"><path d="M202.6 178.5 H210.6 V182.5 L206.6 187.7 L202.6 182.5 Z"/><path d="M202.6 197.5 V192.8 L206.6 187.7 L210.6 192.8 V197.5 Z"/><rect x="202.6" y="197.5" width="8" height="4.9"/></g>
<path d="M804.4 197.4 V193.4 L808.3 189.4 L812.2 193.4 V197.4 Z" fill="#fff" stroke="#78808c" stroke-width="1.3" stroke-linejoin="round"/>
<rect x="2" y="216" width="24" height="472" fill="#e1e1e1"/><rect x="2" y="330" width="23" height="358" fill="#fbfbfb"/>
<path d="M2 216.5 H25.5 V688" fill="none" stroke="#a2a2a2"/>
<path d="M21 217.5 H25 M21 220.5 H25 M21 224.5 H25 M21 228.5 H25 M21 232.5 H25 M17 236.5 H25 M21 239.5 H25 M21 243.5 H25 M21 247.5 H25 M21 251.5 H25 M21 254.5 H25 M21 258.5 H25 M21 262.5 H25 M21 266.5 H25 M21 270.5 H25 M17 273.5 H25 M21 277.5 H25 M21 281.5 H25 M21 285.5 H25 M21 288.5 H25 M21 292.5 H25 M21 296.5 H25 M21 300.5 H25 M21 304.5 H25 M21 307.5 H25 M17 311.5 H25 M21 315.5 H25 M21 319.5 H25 M21 322.5 H25 M21 326.5 H25 M21 330.5 H25 M21 334.5 H25 M21 338.5 H25 M21 341.5 H25 M21 345.5 H25 M17 349.5 H25 M21 353.5 H25 M21 356.5 H25 M21 360.5 H25 M21 364.5 H25 M21 368.5 H25 M21 372.5 H25 M21 375.5 H25 M21 379.5 H25 M21 383.5 H25 M17 387.5 H25 M21 391.5 H25 M21 394.5 H25 M21 398.5 H25 M21 402.5 H25 M21 406.5 H25 M21 409.5 H25 M21 413.5 H25 M21 417.5 H25 M21 421.5 H25 M17 425.5 H25 M21 428.5 H25 M21 432.5 H25 M21 436.5 H25 M21 440.5 H25 M21 443.5 H25 M21 447.5 H25 M21 451.5 H25 M21 455.5 H25 M21 459.5 H25 M17 462.5 H25 M21 466.5 H25 M21 470.5 H25 M21 474.5 H25 M21 477.5 H25 M21 481.5 H25 M21 485.5 H25 M21 489.5 H25 M21 493.5 H25 M21 496.5 H25 M17 500.5 H25 M21 504.5 H25 M21 508.5 H25 M21 511.5 H25 M21 515.5 H25 M21 519.5 H25 M21 523.5 H25 M21 527.5 H25 M21 530.5 H25 M21 534.5 H25 M17 538.5 H25 M21 542.5 H25 M21 545.5 H25 M21 549.5 H25 M21 553.5 H25 M21 557.5 H25 M21 561.5 H25 M21 564.5 H25 M21 568.5 H25 M21 572.5 H25 M17 576.5 H25 M21 579.5 H25 M21 583.5 H25 M21 587.5 H25 M21 591.5 H25 M21 595.5 H25 M21 598.5 H25 M21 602.5 H25 M21 606.5 H25 M21 610.5 H25 M17 614.5 H25 M21 617.5 H25 M21 621.5 H25 M21 625.5 H25 M21 629.5 H25 M21 632.5 H25 M21 636.5 H25 M21 640.5 H25 M21 644.5 H25 M21 648.5 H25 M17 651.5 H25 M21 655.5 H25 M21 659.5 H25 M21 663.5 H25 M21 666.5 H25 M21 670.5 H25 M21 674.5 H25 M21 678.5 H25 M21 682.5 H25 M21 685.5 H25" stroke="#a2a2a2" stroke-width="1" shape-rendering="crispEdges"/>
<text x="13.1" y="258.0" font-size="10" fill="#3c3c3c" text-anchor="middle">2</text>
<text x="13.1" y="296.0" font-size="10" fill="#3c3c3c" text-anchor="middle">1</text>
<text x="13.1" y="334.0" font-size="10" fill="#3c3c3c" text-anchor="middle">0</text>
<text x="13.1" y="372.0" font-size="10" fill="#3c3c3c" text-anchor="middle">1</text>
<text x="13.1" y="410.0" font-size="10" fill="#3c3c3c" text-anchor="middle">2</text>
<text x="13.1" y="447.0" font-size="10" fill="#3c3c3c" text-anchor="middle">3</text>
<text x="13.1" y="485.0" font-size="10" fill="#3c3c3c" text-anchor="middle">4</text>
<text x="13.1" y="523.0" font-size="10" fill="#3c3c3c" text-anchor="middle">5</text>
<text x="13.1" y="561.0" font-size="10" fill="#3c3c3c" text-anchor="middle">6</text>
<text x="13.1" y="599.0" font-size="10" fill="#3c3c3c" text-anchor="middle">7</text>
<text x="13.1" y="636.0" font-size="10" fill="#3c3c3c" text-anchor="middle">8</text>
<text x="13.1" y="674.0" font-size="10" fill="#3c3c3c" text-anchor="middle">9</text>
<path d="M181 328.5 H204.5 V305" fill="none" stroke="#cfcfcf" shape-rendering="crispEdges"/>
<path d="M831 328.5 H806.5 V305" fill="none" stroke="#cfcfcf" shape-rendering="crispEdges"/>
<rect x="205" y="331" width="1" height="17" fill="#000"/>
<polygon points="990.9,188.9 997.1,188.9 994,184.9" fill="#333"/>
<rect x="987.5" y="194.5" width="13" height="201" fill="#f5f5f5" stroke="#c6c6c6"/>
<polygon points="990.9,677 997.1,677 994,680.8" fill="#333"/>
<g fill="none" stroke="#444" stroke-width="1.3"><path d="M642.65 697.8 V694.95 H645.7 M651.5 694.95 H654.55 V697.8 M654.55 702.3 V705.15 H651.5 M645.7 705.15 H642.65 V702.3"/><rect x="645.05" y="697.75" width="7.1" height="4.1"/></g>
<rect x="670" y="691" width="30" height="18" fill="#fafafa"/>
<g fill="none" stroke="#444" stroke-width="1.3"><path d="M683.7 706.15 H679.75 V694.95 H690.25 V697"/><path d="M681.4 697.5 H688.9 M681.4 699.5 H683.6 M681.4 701.5 H683.3 M681.4 703.5 H682.8" stroke-width="1.05"/></g>
<rect x="686.5" y="699.5" width="3.6" height="1.8" fill="#fafafa" stroke="#444" stroke-width="1"/><rect x="684.3" y="700.8" width="7.9" height="4" rx="1" fill="#444"/><rect x="686" y="702.1" width="4.5" height="0.8" fill="#f0f0f0"/><rect x="686.5" y="704" width="3.6" height="2.1" fill="#fafafa" stroke="#444" stroke-width="1"/>
<g fill="none" stroke="#444" stroke-width="1.3"><rect x="715.85" y="694.95" width="10.4" height="11.2" fill="#e8e8e8"/><path d="M717.3 696.5 H725 L717.4 700 L725 700.8 L717.4 704.25 H725" stroke-width="1.1" stroke-linejoin="round"/></g>
<g fill="none" stroke="#444" stroke-width="1.3"><rect x="751.85" y="694.95" width="11.4" height="11.2" fill="#f4f4f4"/><path d="M757.55 694.95 V706.15"/><path d="M753.3 697.5 H756 M753.3 699.5 H756 M753.3 701.5 H756 M753.3 703.5 H756 M759.1 697.5 H761.9 M759.1 699.5 H761.9 M759.1 701.5 H761.9 M759.1 703.5 H760.9" stroke-width="1.05"/></g>
<polygon points="843.2,698.4 848.0,698.4 845.6,701.1999999999999" fill="#555"/>
<rect x="856.4" y="699.6" width="6.6" height="1.2" fill="#444"/>
<rect x="876" y="699" width="84" height="3" fill="#a8a8a8"/>
<rect x="916.5" y="694.5" width="3.4" height="11.4" fill="#fff" stroke="#8a8a8a"/>
<path d="M974 700.5 H981 M977.5 697 V704" stroke="#3a3a3a" stroke-width="1.3"/>
<rect x="996" y="698" width="1" height="1" fill="#fff"/><rect x="997" y="699" width="1" height="1" fill="#b4b4b4"/><rect x="993" y="701" width="1" height="1" fill="#fff"/><rect x="994" y="702" width="1" height="1" fill="#b4b4b4"/><rect x="996" y="701" width="1" height="1" fill="#fff"/><rect x="997" y="702" width="1" height="1" fill="#b4b4b4"/><rect x="990" y="704" width="1" height="1" fill="#fff"/><rect x="991" y="705" width="1" height="1" fill="#b4b4b4"/><rect x="993" y="704" width="1" height="1" fill="#fff"/><rect x="994" y="705" width="1" height="1" fill="#b4b4b4"/><rect x="996" y="704" width="1" height="1" fill="#fff"/><rect x="997" y="705" width="1" height="1" fill="#b4b4b4"/>
<rect x="0" y="38" width="1" height="674" fill="#7e7e7e"/><rect x="1" y="38" width="1" height="674" fill="#c2c2c2"/><rect x="1003" y="38" width="1" height="674" fill="#707070"/><rect x="1002" y="38" width="1" height="674" fill="#cfcfcf"/><rect x="0" y="711" width="1004" height="1" fill="#707070"/><rect x="1" y="710" width="1002" height="1" fill="#cdcdcd"/>
</svg>
</body></html>
